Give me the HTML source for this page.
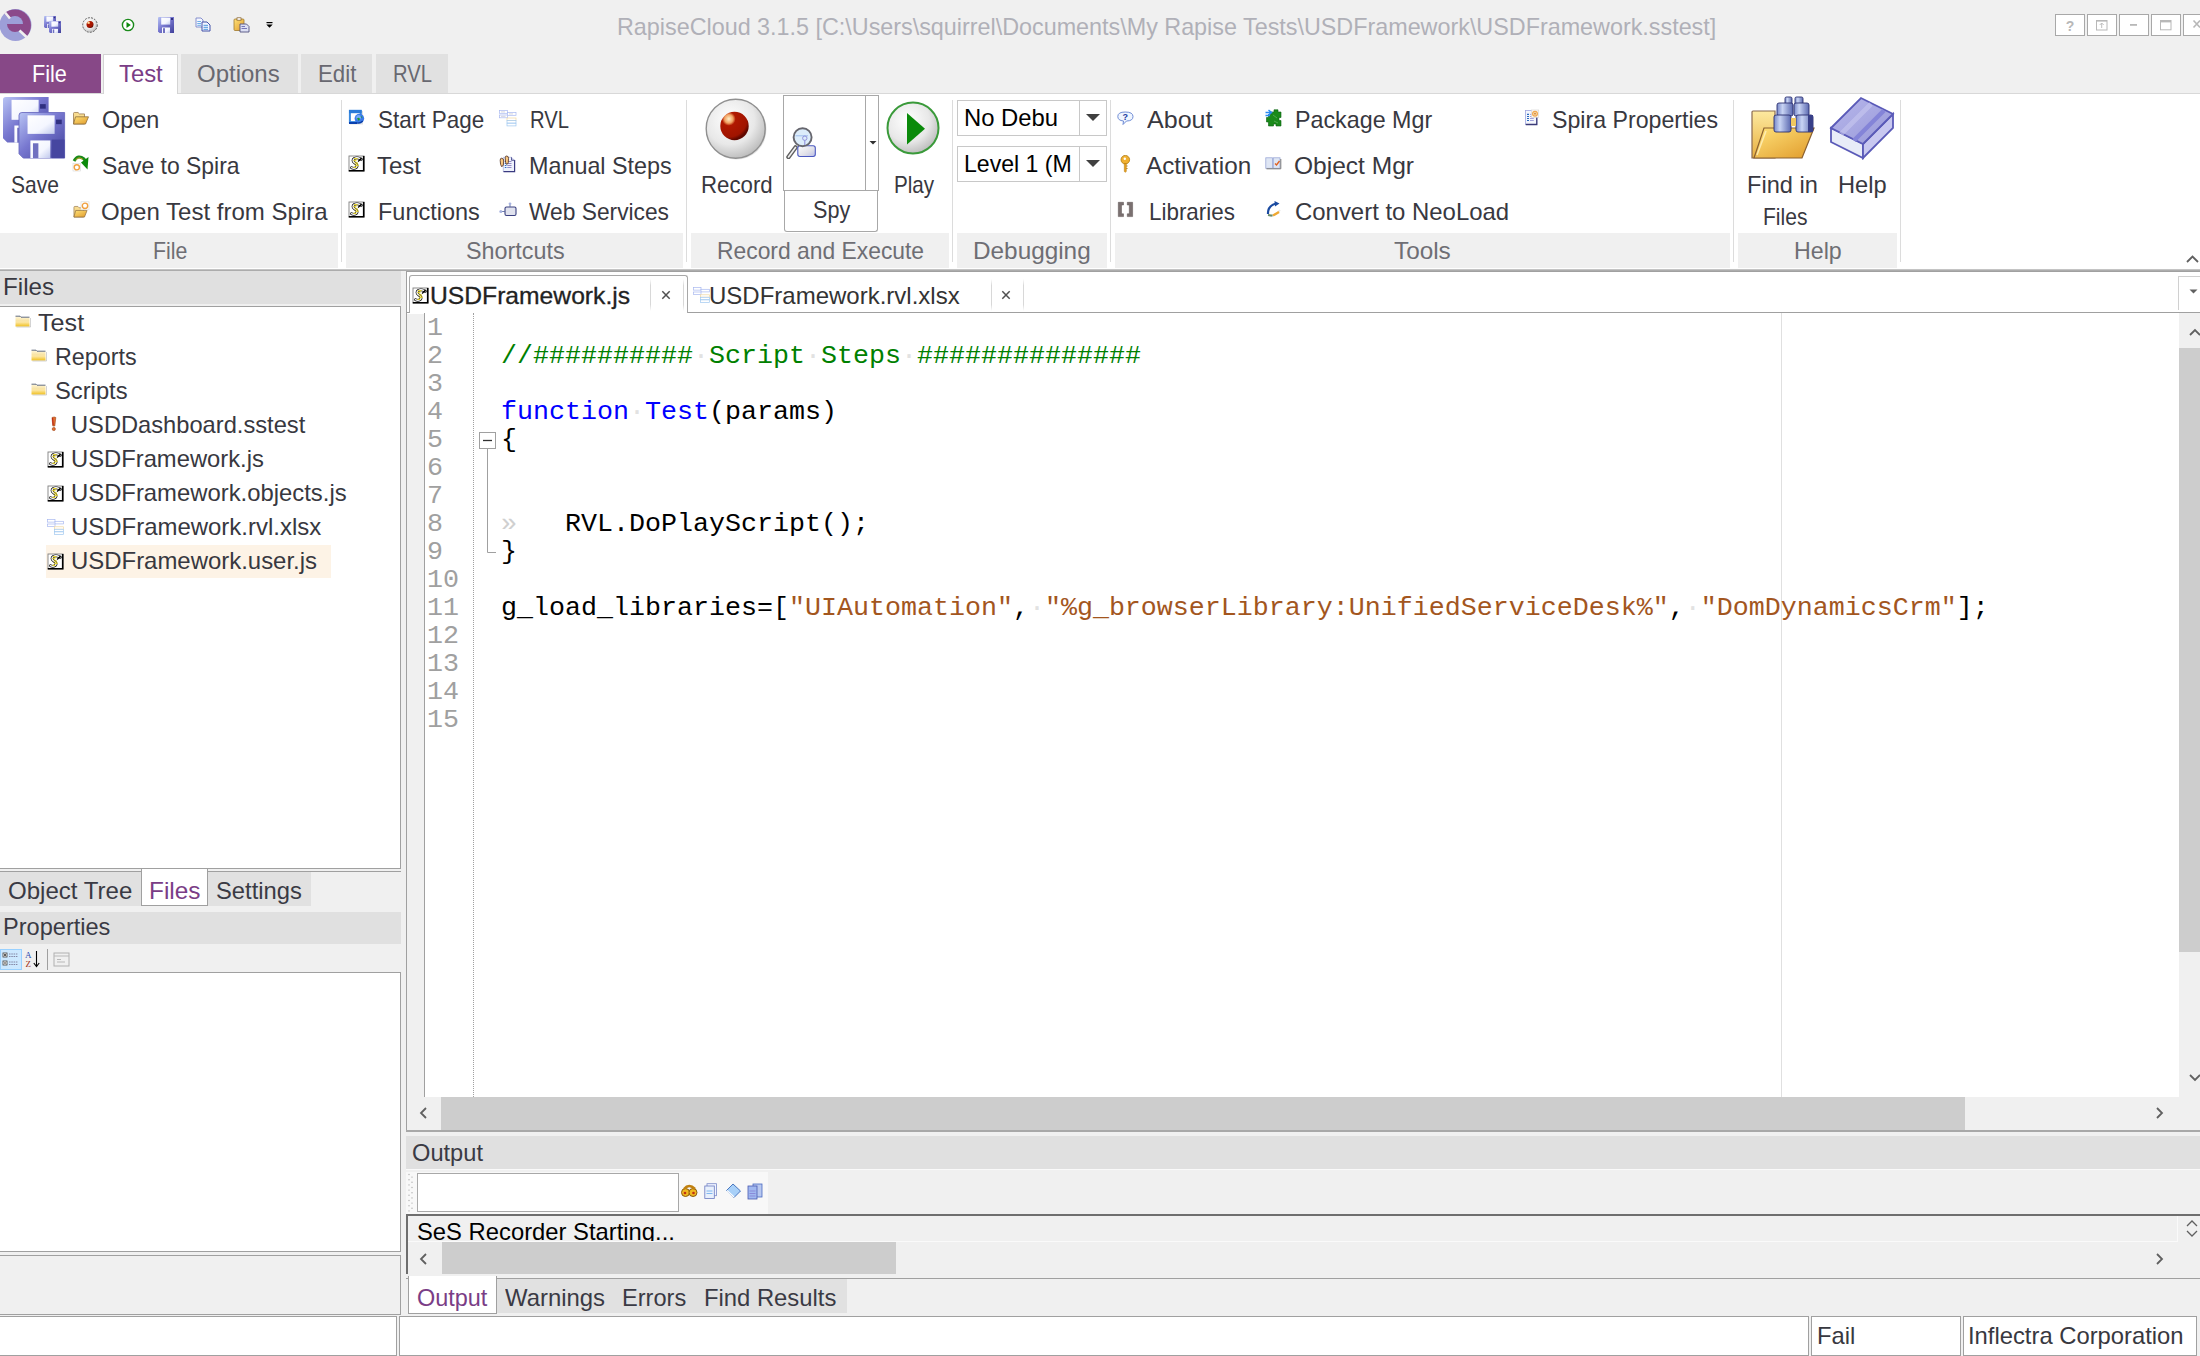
<!DOCTYPE html>
<html><head><meta charset="utf-8"><style>
html,body{margin:0;padding:0;}
body{width:2200px;height:1356px;overflow:hidden;background:#f0f0f0;position:relative;font-family:"Liberation Sans", sans-serif;}
body>div,body>svg{position:absolute;box-sizing:border-box;}
.t{white-space:pre;}
</style></head><body>
<div class="t" style="left:616.80px;top:15.38px;font-size:24px;line-height:24px;color:#b0b0b8;font-family:'Liberation Sans', sans-serif;transform:scaleX(0.9723);transform-origin:0 0;">RapiseCloud 3.1.5 [C:\Users\squirrel\Documents\My Rapise Tests\USDFramework\USDFramework.sstest]</div>
<div style="left:0px;top:93px;width:2200px;height:176px;background:#fff;border-top:1px solid #d8d8d8"></div>
<div style="left:0px;top:54px;width:101px;height:39px;background:#874887"></div>
<div class="t" style="left:32.00px;top:62.18px;font-size:24px;line-height:24px;color:#ffffff;font-family:'Liberation Sans', sans-serif;transform:scaleX(0.9010);transform-origin:0 0;">File</div>
<div style="left:103px;top:54px;width:75px;height:40px;background:#fff;border:1px solid #d4d4d4;border-bottom:none"></div>
<div class="t" style="left:119.30px;top:62.18px;font-size:24px;line-height:24px;color:#7a3d86;font-family:'Liberation Sans', sans-serif;transform:scaleX(0.9932);transform-origin:0 0;">Test</div>
<div style="left:181px;top:54px;width:117px;height:39px;background:#e1e1e1"></div>
<div class="t" style="left:197.30px;top:62.18px;font-size:24px;line-height:24px;color:#686870;font-family:'Liberation Sans', sans-serif;transform:scaleX(0.9994);transform-origin:0 0;">Options</div>
<div style="left:301px;top:54px;width:71px;height:39px;background:#e1e1e1"></div>
<div class="t" style="left:318.00px;top:62.18px;font-size:24px;line-height:24px;color:#686870;font-family:'Liberation Sans', sans-serif;transform:scaleX(0.9281);transform-origin:0 0;">Edit</div>
<div style="left:376px;top:54px;width:72px;height:39px;background:#e1e1e1"></div>
<div class="t" style="left:393.00px;top:62.18px;font-size:24px;line-height:24px;color:#686870;font-family:'Liberation Sans', sans-serif;transform:scaleX(0.8432);transform-origin:0 0;">RVL</div>
<div style="left:0px;top:269px;width:2200px;height:2px;background:linear-gradient(#d0d0d0,#a0a0a0)"></div>
<div style="left:0px;top:233px;width:338px;height:35px;background:#f0f0f0"></div>
<div class="t" style="left:152.70px;top:239.18px;font-size:24px;line-height:24px;color:#6e6e74;font-family:'Liberation Sans', sans-serif;transform:scaleX(0.8880);transform-origin:0 0;">File</div>
<div style="left:346px;top:233px;width:337px;height:35px;background:#f0f0f0"></div>
<div class="t" style="left:465.70px;top:239.18px;font-size:24px;line-height:24px;color:#6e6e74;font-family:'Liberation Sans', sans-serif;transform:scaleX(0.9726);transform-origin:0 0;">Shortcuts</div>
<div style="left:691px;top:233px;width:258px;height:35px;background:#f0f0f0"></div>
<div class="t" style="left:716.50px;top:239.18px;font-size:24px;line-height:24px;color:#6e6e74;font-family:'Liberation Sans', sans-serif;transform:scaleX(0.9522);transform-origin:0 0;">Record and Execute</div>
<div style="left:957px;top:233px;width:150px;height:35px;background:#f0f0f0"></div>
<div class="t" style="left:973.30px;top:239.18px;font-size:24px;line-height:24px;color:#6e6e74;font-family:'Liberation Sans', sans-serif;transform:scaleX(1.0136);transform-origin:0 0;">Debugging</div>
<div style="left:1115px;top:233px;width:615px;height:35px;background:#f0f0f0"></div>
<div class="t" style="left:1394.00px;top:239.18px;font-size:24px;line-height:24px;color:#6e6e74;font-family:'Liberation Sans', sans-serif;transform:scaleX(1.0125);transform-origin:0 0;">Tools</div>
<div style="left:1738px;top:233px;width:159px;height:35px;background:#f0f0f0"></div>
<div class="t" style="left:1794.00px;top:239.18px;font-size:24px;line-height:24px;color:#6e6e74;font-family:'Liberation Sans', sans-serif;transform:scaleX(0.9661);transform-origin:0 0;">Help</div>
<div style="left:341px;top:100px;width:1px;height:162px;background:#dcdcdc"></div>
<div style="left:686px;top:100px;width:1px;height:162px;background:#dcdcdc"></div>
<div style="left:952px;top:100px;width:1px;height:162px;background:#dcdcdc"></div>
<div style="left:1110px;top:100px;width:1px;height:162px;background:#dcdcdc"></div>
<div style="left:1733px;top:100px;width:1px;height:162px;background:#dcdcdc"></div>
<div style="left:1900px;top:100px;width:1px;height:162px;background:#dcdcdc"></div>
<div class="t" style="left:11.00px;top:172.98px;font-size:24px;line-height:24px;color:#383840;font-family:'Liberation Sans', sans-serif;transform:scaleX(0.8767);transform-origin:0 0;">Save</div>
<div class="t" style="left:101.80px;top:107.88px;font-size:24px;line-height:24px;color:#383840;font-family:'Liberation Sans', sans-serif;transform:scaleX(0.9736);transform-origin:0 0;">Open</div>
<div class="t" style="left:101.80px;top:153.98px;font-size:24px;line-height:24px;color:#383840;font-family:'Liberation Sans', sans-serif;transform:scaleX(0.9547);transform-origin:0 0;">Save to Spira</div>
<div class="t" style="left:101.00px;top:199.98px;font-size:24px;line-height:24px;color:#383840;font-family:'Liberation Sans', sans-serif;transform:scaleX(1.0014);transform-origin:0 0;">Open Test from Spira</div>
<div class="t" style="left:377.90px;top:107.88px;font-size:24px;line-height:24px;color:#383840;font-family:'Liberation Sans', sans-serif;transform:scaleX(0.9358);transform-origin:0 0;">Start Page</div>
<div class="t" style="left:377.00px;top:153.98px;font-size:24px;line-height:24px;color:#383840;font-family:'Liberation Sans', sans-serif;transform:scaleX(1.0000);transform-origin:0 0;">Test</div>
<div class="t" style="left:378.00px;top:199.98px;font-size:24px;line-height:24px;color:#383840;font-family:'Liberation Sans', sans-serif;transform:scaleX(0.9779);transform-origin:0 0;">Functions</div>
<div class="t" style="left:530.00px;top:107.88px;font-size:24px;line-height:24px;color:#383840;font-family:'Liberation Sans', sans-serif;transform:scaleX(0.8432);transform-origin:0 0;">RVL</div>
<div class="t" style="left:529.00px;top:153.98px;font-size:24px;line-height:24px;color:#383840;font-family:'Liberation Sans', sans-serif;transform:scaleX(0.9724);transform-origin:0 0;">Manual Steps</div>
<div class="t" style="left:528.50px;top:199.98px;font-size:24px;line-height:24px;color:#383840;font-family:'Liberation Sans', sans-serif;transform:scaleX(0.9483);transform-origin:0 0;">Web Services</div>
<div class="t" style="left:701.30px;top:173.28px;font-size:24px;line-height:24px;color:#383840;font-family:'Liberation Sans', sans-serif;transform:scaleX(0.9267);transform-origin:0 0;">Record</div>
<div class="t" style="left:893.80px;top:173.28px;font-size:24px;line-height:24px;color:#383840;font-family:'Liberation Sans', sans-serif;transform:scaleX(0.8599);transform-origin:0 0;">Play</div>
<div style="left:783px;top:95px;width:96px;height:96px;border:1px solid #a8a8a8;background:#fff"></div>
<div style="left:865px;top:95px;width:1px;height:96px;background:#a8a8a8"></div>
<div style="left:784px;top:191px;width:94px;height:41px;border:1px solid #a8a8a8;border-top:none;border-radius:0 0 3px 3px;background:#fff"></div>
<div class="t" style="left:812.80px;top:198.38px;font-size:24px;line-height:24px;color:#383840;font-family:'Liberation Sans', sans-serif;transform:scaleX(0.8991);transform-origin:0 0;">Spy</div>
<div style="left:957px;top:100px;width:150px;height:36px;border:1px solid #c8c8c8;background:#fff"></div>
<div style="left:1079px;top:100px;width:1px;height:36px;background:#c8c8c8"></div>
<div class="t" style="left:964.40px;top:106.48px;font-size:24px;line-height:24px;color:#000;font-family:'Liberation Sans', sans-serif;transform:scaleX(0.9931);transform-origin:0 0;">No Debu</div>
<div style="left:957px;top:146px;width:150px;height:36px;border:1px solid #c8c8c8;background:#fff"></div>
<div style="left:1079px;top:146px;width:1px;height:36px;background:#c8c8c8"></div>
<div class="t" style="left:964.40px;top:152.18px;font-size:24px;line-height:24px;color:#000;font-family:'Liberation Sans', sans-serif;transform:scaleX(0.9616);transform-origin:0 0;">Level 1 (M</div>
<div class="t" style="left:1146.50px;top:107.88px;font-size:24px;line-height:24px;color:#383840;font-family:'Liberation Sans', sans-serif;transform:scaleX(1.0438);transform-origin:0 0;">About</div>
<div class="t" style="left:1146.20px;top:153.98px;font-size:24px;line-height:24px;color:#383840;font-family:'Liberation Sans', sans-serif;transform:scaleX(1.0106);transform-origin:0 0;">Activation</div>
<div class="t" style="left:1148.50px;top:199.88px;font-size:24px;line-height:24px;color:#383840;font-family:'Liberation Sans', sans-serif;transform:scaleX(0.9337);transform-origin:0 0;">Libraries</div>
<div class="t" style="left:1295.20px;top:107.88px;font-size:24px;line-height:24px;color:#383840;font-family:'Liberation Sans', sans-serif;transform:scaleX(0.9698);transform-origin:0 0;">Package Mgr</div>
<div class="t" style="left:1293.90px;top:153.98px;font-size:24px;line-height:24px;color:#383840;font-family:'Liberation Sans', sans-serif;transform:scaleX(1.0224);transform-origin:0 0;">Object Mgr</div>
<div class="t" style="left:1294.50px;top:199.88px;font-size:24px;line-height:24px;color:#383840;font-family:'Liberation Sans', sans-serif;transform:scaleX(0.9970);transform-origin:0 0;">Convert to NeoLoad</div>
<div class="t" style="left:1551.50px;top:107.88px;font-size:24px;line-height:24px;color:#383840;font-family:'Liberation Sans', sans-serif;transform:scaleX(0.9650);transform-origin:0 0;">Spira Properties</div>
<div class="t" style="left:1747.20px;top:173.38px;font-size:24px;line-height:24px;color:#383840;font-family:'Liberation Sans', sans-serif;transform:scaleX(0.9819);transform-origin:0 0;">Find in</div>
<div class="t" style="left:1763.00px;top:204.98px;font-size:24px;line-height:24px;color:#383840;font-family:'Liberation Sans', sans-serif;transform:scaleX(0.8770);transform-origin:0 0;">Files</div>
<div class="t" style="left:1838.00px;top:173.38px;font-size:24px;line-height:24px;color:#383840;font-family:'Liberation Sans', sans-serif;transform:scaleX(0.9843);transform-origin:0 0;">Help</div>
<div style="left:0px;top:271px;width:401px;height:33px;background:#e0e0e0"></div>
<div class="t" style="left:2.50px;top:274.78px;font-size:24px;line-height:24px;color:#383840;font-family:'Liberation Sans', sans-serif;transform:scaleX(1.0074);transform-origin:0 0;">Files</div>
<div style="left:0px;top:306px;width:401px;height:563px;background:#fff;border-top:1px solid #a0a0a0;border-right:1px solid #a0a0a0;border-bottom:1px solid #a0a0a0"></div>
<div style="left:0px;top:871px;width:401px;height:1px;background:#a0a0a0"></div>
<div style="left:46px;top:545px;width:285px;height:33px;background:#fdf3e6"></div>
<div class="t" style="left:38.20px;top:310.98px;font-size:24px;line-height:24px;color:#383840;font-family:'Liberation Sans', sans-serif;transform:scaleX(1.0477);transform-origin:0 0;">Test</div>
<div class="t" style="left:54.70px;top:344.98px;font-size:24px;line-height:24px;color:#383840;font-family:'Liberation Sans', sans-serif;transform:scaleX(0.9702);transform-origin:0 0;">Reports</div>
<div class="t" style="left:54.70px;top:378.98px;font-size:24px;line-height:24px;color:#383840;font-family:'Liberation Sans', sans-serif;transform:scaleX(0.9894);transform-origin:0 0;">Scripts</div>
<div class="t" style="left:70.60px;top:412.98px;font-size:24px;line-height:24px;color:#383840;font-family:'Liberation Sans', sans-serif;transform:scaleX(0.9866);transform-origin:0 0;">USDDashboard.sstest</div>
<div class="t" style="left:70.60px;top:446.98px;font-size:24px;line-height:24px;color:#383840;font-family:'Liberation Sans', sans-serif;transform:scaleX(0.9906);transform-origin:0 0;">USDFramework.js</div>
<div class="t" style="left:70.60px;top:480.98px;font-size:24px;line-height:24px;color:#383840;font-family:'Liberation Sans', sans-serif;transform:scaleX(0.9936);transform-origin:0 0;">USDFramework.objects.js</div>
<div class="t" style="left:70.60px;top:514.98px;font-size:24px;line-height:24px;color:#383840;font-family:'Liberation Sans', sans-serif;transform:scaleX(0.9979);transform-origin:0 0;">USDFramework.rvl.xlsx</div>
<div class="t" style="left:70.60px;top:548.98px;font-size:24px;line-height:24px;color:#383840;font-family:'Liberation Sans', sans-serif;transform:scaleX(0.9970);transform-origin:0 0;">USDFramework.user.js</div>
<div style="left:0px;top:872px;width:141px;height:34px;background:#e1e1e1"></div>
<div style="left:208px;top:872px;width:103px;height:34px;background:#e1e1e1"></div>
<div style="left:141px;top:869px;width:67px;height:37px;background:#fff;border:1px solid #a0a0a0;border-top:none"></div>
<div class="t" style="left:8.20px;top:878.88px;font-size:24px;line-height:24px;color:#3a3a44;font-family:'Liberation Sans', sans-serif;transform:scaleX(1.0024);transform-origin:0 0;">Object Tree</div>
<div class="t" style="left:149.00px;top:878.88px;font-size:24px;line-height:24px;color:#7a3d86;font-family:'Liberation Sans', sans-serif;transform:scaleX(1.0153);transform-origin:0 0;">Files</div>
<div class="t" style="left:216.40px;top:878.88px;font-size:24px;line-height:24px;color:#3a3a44;font-family:'Liberation Sans', sans-serif;transform:scaleX(0.9890);transform-origin:0 0;">Settings</div>
<div style="left:0px;top:912px;width:401px;height:32px;background:#e0e0e0"></div>
<div class="t" style="left:3.00px;top:915.38px;font-size:24px;line-height:24px;color:#3a3a44;font-family:'Liberation Sans', sans-serif;transform:scaleX(0.9819);transform-origin:0 0;">Properties</div>
<div style="left:0px;top:972px;width:401px;height:280px;background:#fff;border-top:1px solid #a0a0a0;border-right:1px solid #a0a0a0;border-bottom:1px solid #a0a0a0"></div>
<div style="left:0px;top:1255px;width:401px;height:60px;background:#f0f0f0;border-top:1px solid #a0a0a0;border-bottom:1px solid #a0a0a0;border-right:1px solid #a0a0a0"></div>
<div style="left:406px;top:271px;width:1794px;height:1px;background:#a0a0a0"></div>
<div style="left:406px;top:271px;width:1px;height:860px;background:#a0a0a0"></div>
<div style="left:407px;top:272px;width:1793px;height:41px;background:#fff"></div>
<div style="left:407px;top:312px;width:1793px;height:1px;background:#a0a0a0"></div>
<div style="left:409px;top:275px;width:279px;height:39px;background:#fff;border:1px solid #a8a8a8;border-bottom:none;border-radius:3px 3px 0 0"></div>
<div class="t" style="left:430.00px;top:283.98px;font-size:24px;line-height:24px;color:#222;font-family:'Liberation Sans', sans-serif;transform:scaleX(1.0276);transform-origin:0 0;-webkit-text-stroke:0.3px #222">USDFramework.js</div>
<div class="t" style="left:709.40px;top:284.18px;font-size:24px;line-height:24px;color:#333;font-family:'Liberation Sans', sans-serif;transform:scaleX(0.9999);transform-origin:0 0;">USDFramework.rvl.xlsx</div>
<div style="left:407px;top:313px;width:1772px;height:784px;background:#fff"></div>
<div style="left:407px;top:314px;width:17px;height:783px;background:#f0f0f0"></div>
<div style="left:424px;top:313px;width:1px;height:784px;background:#a0a0a0"></div>
<div style="left:473px;top:313px;width:0px;height:784px;border-left:1px dotted #a0a0a0"></div>
<div style="left:1781px;top:313px;width:1px;height:784px;background:#e0e0e0"></div>
<div class="t" style="left:427.00px;top:315.07px;font-size:26.67px;line-height:26.67px;color:#a0a0a0;font-family:'Liberation Mono', monospace;">1</div>
<div class="t" style="left:427.00px;top:343.07px;font-size:26.67px;line-height:26.67px;color:#a0a0a0;font-family:'Liberation Mono', monospace;">2</div>
<div class="t" style="left:427.00px;top:371.07px;font-size:26.67px;line-height:26.67px;color:#a0a0a0;font-family:'Liberation Mono', monospace;">3</div>
<div class="t" style="left:427.00px;top:399.07px;font-size:26.67px;line-height:26.67px;color:#a0a0a0;font-family:'Liberation Mono', monospace;">4</div>
<div class="t" style="left:427.00px;top:427.07px;font-size:26.67px;line-height:26.67px;color:#a0a0a0;font-family:'Liberation Mono', monospace;">5</div>
<div class="t" style="left:427.00px;top:455.07px;font-size:26.67px;line-height:26.67px;color:#a0a0a0;font-family:'Liberation Mono', monospace;">6</div>
<div class="t" style="left:427.00px;top:483.07px;font-size:26.67px;line-height:26.67px;color:#a0a0a0;font-family:'Liberation Mono', monospace;">7</div>
<div class="t" style="left:427.00px;top:511.07px;font-size:26.67px;line-height:26.67px;color:#a0a0a0;font-family:'Liberation Mono', monospace;">8</div>
<div class="t" style="left:427.00px;top:539.07px;font-size:26.67px;line-height:26.67px;color:#a0a0a0;font-family:'Liberation Mono', monospace;">9</div>
<div class="t" style="left:427.00px;top:567.07px;font-size:26.67px;line-height:26.67px;color:#a0a0a0;font-family:'Liberation Mono', monospace;">10</div>
<div class="t" style="left:427.00px;top:595.07px;font-size:26.67px;line-height:26.67px;color:#a0a0a0;font-family:'Liberation Mono', monospace;">11</div>
<div class="t" style="left:427.00px;top:623.07px;font-size:26.67px;line-height:26.67px;color:#a0a0a0;font-family:'Liberation Mono', monospace;">12</div>
<div class="t" style="left:427.00px;top:651.07px;font-size:26.67px;line-height:26.67px;color:#a0a0a0;font-family:'Liberation Mono', monospace;">13</div>
<div class="t" style="left:427.00px;top:679.07px;font-size:26.67px;line-height:26.67px;color:#a0a0a0;font-family:'Liberation Mono', monospace;">14</div>
<div class="t" style="left:427.00px;top:707.07px;font-size:26.67px;line-height:26.67px;color:#a0a0a0;font-family:'Liberation Mono', monospace;">15</div>
<div class="t" style="left:501.00px;top:343.07px;font-size:26.67px;line-height:26.67px;color:#000;font-family:'Liberation Mono', monospace;"><span style="color:#008000">//##########<span style="color:#e2e2e2">·</span><span style="color:#008000">Script</span><span style="color:#e2e2e2">·</span><span style="color:#008000">Steps</span><span style="color:#e2e2e2">·</span><span style="color:#008000">##############</span></span></div>
<div class="t" style="left:501.00px;top:399.07px;font-size:26.67px;line-height:26.67px;color:#000;font-family:'Liberation Mono', monospace;"><span style="color:#0000ff">function</span><span style="color:#e2e2e2">·</span><span style="color:#0000ff">Test</span>(params)</div>
<div class="t" style="left:501.00px;top:427.07px;font-size:26.67px;line-height:26.67px;color:#000;font-family:'Liberation Mono', monospace;">{</div>
<div class="t" style="left:501.00px;top:511.07px;font-size:26.67px;line-height:26.67px;color:#000;font-family:'Liberation Mono', monospace;"><span style="color:#d0d0d0">»</span>   RVL.DoPlayScript();</div>
<div class="t" style="left:501.00px;top:539.07px;font-size:26.67px;line-height:26.67px;color:#000;font-family:'Liberation Mono', monospace;">}</div>
<div class="t" style="left:501.00px;top:595.07px;font-size:26.67px;line-height:26.67px;color:#000;font-family:'Liberation Mono', monospace;">g_load_libraries=[<span style="color:#a3561e">"UIAutomation"</span>,<span style="color:#e2e2e2">·</span><span style="color:#a3561e">"%g_browserLibrary:UnifiedServiceDesk%"</span>,<span style="color:#e2e2e2">·</span><span style="color:#a3561e">"DomDynamicsCrm"</span>];</div>
<div style="left:2179px;top:313px;width:21px;height:784px;background:#f0f0f0"></div>
<div style="left:2179px;top:348px;width:21px;height:604px;background:#cdcdcd"></div>
<div style="left:407px;top:1097px;width:1772px;height:33px;background:#f0f0f0"></div>
<div style="left:441px;top:1097px;width:1524px;height:33px;background:#cdcdcd"></div>
<div style="left:406px;top:1130px;width:1794px;height:2px;background:#a8a8a8"></div>
<div style="left:406px;top:1136px;width:1794px;height:33px;background:#e0e0e0"></div>
<div class="t" style="left:411.50px;top:1140.78px;font-size:24px;line-height:24px;color:#3a3a44;font-family:'Liberation Sans', sans-serif;transform:scaleX(0.9847);transform-origin:0 0;">Output</div>
<div style="left:406px;top:1169px;width:1794px;height:1px;background:#fafafa"></div>
<div style="left:406px;top:1172px;width:362px;height:42px;background:#f8f8f8"></div>
<div style="left:417px;top:1173px;width:262px;height:39px;background:#fff;border:1px solid #a8a8a8"></div>
<div style="left:406px;top:1214px;width:1794px;height:2px;background:#6e6e6e"></div>
<div style="left:406px;top:1214px;width:2px;height:60px;background:#6e6e6e"></div>
<div class="t" style="left:417.00px;top:1220.38px;font-size:24px;line-height:24px;color:#000;font-family:'Liberation Sans', sans-serif;transform:scaleX(0.9914);transform-origin:0 0;height:20.5px;overflow:hidden">SeS Recorder Starting...</div>
<div style="left:408px;top:1241px;width:1770px;height:1px;background:#fafafa"></div>
<div style="left:2177px;top:1216px;width:1px;height:26px;background:#fafafa"></div>
<div style="left:408px;top:1242px;width:1792px;height:32px;background:#f0f0f0"></div>
<div style="left:442px;top:1242px;width:454px;height:32px;background:#cdcdcd"></div>
<div style="left:406px;top:1278px;width:1794px;height:1px;background:#a0a0a0"></div>
<div style="left:497px;top:1279px;width:350px;height:34px;background:#e1e1e1"></div>
<div style="left:408px;top:1276px;width:89px;height:38px;background:#fff;border:1px solid #a0a0a0;border-top:none"></div>
<div class="t" style="left:417.00px;top:1286.38px;font-size:24px;line-height:24px;color:#7a3d86;font-family:'Liberation Sans', sans-serif;transform:scaleX(0.9764);transform-origin:0 0;">Output</div>
<div class="t" style="left:505.00px;top:1286.38px;font-size:24px;line-height:24px;color:#3a3a44;font-family:'Liberation Sans', sans-serif;transform:scaleX(0.9950);transform-origin:0 0;">Warnings</div>
<div class="t" style="left:622.00px;top:1286.38px;font-size:24px;line-height:24px;color:#3a3a44;font-family:'Liberation Sans', sans-serif;transform:scaleX(0.9836);transform-origin:0 0;">Errors</div>
<div class="t" style="left:704.00px;top:1286.38px;font-size:24px;line-height:24px;color:#3a3a44;font-family:'Liberation Sans', sans-serif;transform:scaleX(0.9919);transform-origin:0 0;">Find Results</div>
<div style="left:0px;top:1316px;width:2200px;height:40px;background:#f0f0f0"></div>
<div style="left:-1px;top:1316px;width:398px;height:40px;background:#fff;border:1px solid #a0a0a0"></div>
<div style="left:399px;top:1316px;width:1410px;height:40px;background:#fff;border:1px solid #a0a0a0"></div>
<div style="left:1811px;top:1316px;width:150px;height:40px;background:#fff;border:1px solid #a0a0a0"></div>
<div style="left:1963px;top:1316px;width:234px;height:40px;background:#fff;border:1px solid #a0a0a0"></div>
<div class="t" style="left:1816.80px;top:1323.98px;font-size:24px;line-height:24px;color:#383840;font-family:'Liberation Sans', sans-serif;transform:scaleX(0.9890);transform-origin:0 0;">Fail</div>
<div class="t" style="left:1968.00px;top:1323.98px;font-size:24px;line-height:24px;color:#383840;font-family:'Liberation Sans', sans-serif;transform:scaleX(0.9913);transform-origin:0 0;">Inflectra Corporation</div>
<svg style="left:0px;top:9px" width="32" height="32" viewBox="0 0 32 32"><circle cx="15.5" cy="16" r="16" fill="#9d9fd8"/>
<path d="M4.2 4.7 A16 16 0 0 1 26.8 27.3 Z" fill="#8b4a8b"/>
<path d="M7 15 A8 8 0 0 1 23 15 Z" fill="#9d9fd8"/><path d="M7 15 A8 8 0 0 0 23 15 Z" fill="#8b4a8b"/>
<path d="M5 3.5 L10 9.5 M19.5 21.5 L26.5 28" stroke="#f0f0f0" stroke-width="2.6"/></svg>
<svg style="position:absolute;width:0;height:0"><defs>
<linearGradient id="flop" x1="0" y1="0" x2="1" y2="1"><stop offset="0" stop-color="#b8c4f4"/><stop offset="0.45" stop-color="#7878d0"/><stop offset="1" stop-color="#40409a"/></linearGradient>
<linearGradient id="lab" x1="0" y1="0" x2="1" y2="1"><stop offset="0" stop-color="#ffffff"/><stop offset="0.6" stop-color="#f4f6ff"/><stop offset="1" stop-color="#c0c8ec"/></linearGradient>
<linearGradient id="fold" x1="0" y1="0" x2="0" y2="1"><stop offset="0" stop-color="#fde9a0"/><stop offset="1" stop-color="#e8b040"/></linearGradient>
<linearGradient id="fold2" x1="0" y1="0" x2="1" y2="1"><stop offset="0" stop-color="#ffe27a"/><stop offset="1" stop-color="#e09a2a"/></linearGradient>
<radialGradient id="redball" cx="0.3" cy="0.25" r="0.75"><stop offset="0" stop-color="#fff0c8"/><stop offset="0.2" stop-color="#f0a060"/><stop offset="0.32" stop-color="#b01800"/><stop offset="0.85" stop-color="#a01400"/><stop offset="1" stop-color="#600800"/></radialGradient>
<radialGradient id="grayball" cx="0.4" cy="0.35" r="0.7"><stop offset="0" stop-color="#ffffff"/><stop offset="0.6" stop-color="#e8e8e8"/><stop offset="1" stop-color="#b8b8b8"/></radialGradient>
<linearGradient id="book" x1="0" y1="0" x2="1" y2="1"><stop offset="0" stop-color="#b8b8ec"/><stop offset="1" stop-color="#9898d8"/></linearGradient>
<linearGradient id="bino" x1="0" y1="0" x2="1" y2="0"><stop offset="0" stop-color="#7888c8"/><stop offset="0.35" stop-color="#c8d4f4"/><stop offset="1" stop-color="#5a68b0"/></linearGradient>
</defs></svg>
<svg style="left:44px;top:16px" width="17" height="17" viewBox="0 0 17 17"><g transform="translate(0,0) scale(0.75)"><path d="M0 1 Q0 0 1 0 H16 V16 H1.5 L0 14.5 Z" fill="url(#flop)"/>
<rect x="3.2" y="0.6" width="9" height="7" fill="url(#lab)"/><rect x="13" y="1" width="2" height="2" fill="#303080"/>
<rect x="4" y="10.5" width="8" height="5.5" fill="url(#lab)"/><rect x="5" y="11.2" width="2" height="4.8" fill="#7070c0"/></g><g transform="translate(5,5) scale(0.75)"><path d="M0 1 Q0 0 1 0 H16 V16 H1.5 L0 14.5 Z" fill="url(#flop)"/>
<rect x="3.2" y="0.6" width="9" height="7" fill="url(#lab)"/><rect x="13" y="1" width="2" height="2" fill="#303080"/>
<rect x="4" y="10.5" width="8" height="5.5" fill="url(#lab)"/><rect x="5" y="11.2" width="2" height="4.8" fill="#7070c0"/></g></svg>
<svg style="left:82px;top:17px" width="17" height="17" viewBox="0 0 17 17"><circle cx="8" cy="8" r="7.3" fill="url(#grayball)" stroke="#555" stroke-width="0.9" stroke-dasharray="2 1.2"/><circle cx="8" cy="7.5" r="3.5" fill="url(#redball)"/></svg>
<svg style="left:121px;top:18px" width="15" height="15" viewBox="0 0 15 15"><circle cx="7" cy="7" r="5.6" fill="#fff" stroke="#1a8a1a" stroke-width="1.4"/><path d="M5.5 4 L9.8 7 L5.5 10 Z" fill="#0a8a0a"/></svg>
<svg style="left:157px;top:16px" width="18" height="18" viewBox="0 0 18 18"><g transform="translate(1,1) scale(1.0)"><path d="M0 1 Q0 0 1 0 H16 V16 H1.5 L0 14.5 Z" fill="url(#flop)"/>
<rect x="3.2" y="0.6" width="9" height="7" fill="url(#lab)"/><rect x="13" y="1" width="2" height="2" fill="#303080"/>
<rect x="4" y="10.5" width="8" height="5.5" fill="url(#lab)"/><rect x="5" y="11.2" width="2" height="4.8" fill="#7070c0"/></g></svg>
<svg style="left:195px;top:17px" width="17" height="15" viewBox="0 0 17 15"><path d="M1 1 H6 L8 3 V10 H1 Z" fill="#f4f6ff" stroke="#7a86c8" stroke-width="0.9"/><path d="M2.3 4.5 H6 M2.3 6.5 H6 M2.3 8.3 H6" stroke="#4a9ae0" stroke-width="0.8"/>
<path d="M7 5 H12 L15 8 V14 H7 Z" fill="#f4f6ff" stroke="#4050a8" stroke-width="1"/><path d="M8.5 8.3 H13 M8.5 10.3 H13 M8.5 12.3 H13" stroke="#3a8ad8" stroke-width="0.9"/></svg>
<svg style="left:233px;top:17px" width="18" height="16" viewBox="0 0 18 16"><rect x="1" y="2" width="10" height="11.5" rx="1" fill="url(#fold2)" stroke="#a07a30" stroke-width="0.8"/><rect x="4" y="0.8" width="4" height="2.4" fill="#fff" stroke="#805a20" stroke-width="0.7"/>
<path d="M7 7 H13.5 L16 9.5 V15 H7 Z" fill="#dde0f4" stroke="#505080" stroke-width="0.9"/><path d="M8.5 9.5 H12 M8.5 11.5 H14" stroke="#6a6ab0" stroke-width="0.9"/></svg>
<svg style="left:265px;top:20px" width="9" height="9" viewBox="0 0 9 9"><rect x="1.5" y="2" width="6" height="1.2" fill="#000"/><path d="M1.3 4.6 H7.7 L4.5 7.8 Z" fill="#000"/></svg>
<div style="left:2055px;top:14px;width:30px;height:22px;background:#fff;border:1.3px solid #a8a8a8"></div>
<div style="left:2087px;top:14px;width:30px;height:22px;background:#fff;border:1.3px solid #a8a8a8"></div>
<div style="left:2119px;top:14px;width:30px;height:22px;background:#fff;border:1.3px solid #a8a8a8"></div>
<div style="left:2151px;top:14px;width:30px;height:22px;background:#fff;border:1.3px solid #a8a8a8"></div>
<div style="left:2183px;top:14px;width:30px;height:22px;background:#fff;border:1.3px solid #a8a8a8"></div>
<svg style="left:2055px;top:14px" width="30" height="22" viewBox="0 0 30 22"><text x="15" y="16.5" font-size="14" font-weight="bold" text-anchor="middle" fill="#b8b8b8" font-family="Liberation Sans">?</text></svg>
<svg style="left:2087px;top:14px" width="30" height="22" viewBox="0 0 30 22"><rect x="9.5" y="6.5" width="10.5" height="9.5" fill="none" stroke="#b8b8b8" stroke-width="1"/><rect x="9.5" y="6" width="10.5" height="1.6" fill="#b8b8b8"/><path d="M14.7 14 V9.2 M12.7 11 L14.7 9 L16.7 11" stroke="#b8b8b8" stroke-width="0.9" fill="none"/></svg>
<svg style="left:2119px;top:14px" width="30" height="22" viewBox="0 0 30 22"><rect x="11" y="10" width="7" height="1.8" fill="#b8b8b8"/></svg>
<svg style="left:2151px;top:14px" width="30" height="22" viewBox="0 0 30 22"><rect x="9.5" y="6.5" width="10.5" height="9.3" fill="none" stroke="#b8b8b8" stroke-width="1"/><rect x="9.5" y="6" width="10.5" height="2.4" fill="#b8b8b8"/></svg>
<svg style="left:2183px;top:14px" width="17" height="22" viewBox="0 0 17 22"><path d="M10.5 6.5 L17 13.5 M17 6.5 L10.5 13.5" stroke="#b8b8b8" stroke-width="1.6"/></svg>
<svg style="left:2px;top:96px" width="64" height="64" viewBox="0 0 64 64"><g transform="translate(1,1) scale(2.85)">
<path d="M0 1 Q0 0 1 0 H16 V16 H1.5 L0 14.5 Z" fill="url(#flop)"/><rect x="3" y="1" width="9.5" height="7" fill="url(#lab)"/><rect x="13" y="2.5" width="2" height="1.6" fill="#303080"/><rect x="4" y="10" width="7" height="6" fill="url(#lab)"/><rect x="5" y="10.8" width="2" height="5.2" fill="#7070c0"/></g>
<g transform="translate(17,16.5) scale(2.85)">
<path d="M0 1 Q0 0 1 0 H16 V16 H1.5 L0 14.5 Z" fill="url(#flop)" stroke="#6868c0" stroke-width="0.3"/><rect x="3" y="1" width="9.5" height="6.5" fill="url(#lab)"/><rect x="13" y="2.5" width="2" height="1.6" fill="#303080"/><rect x="4" y="9.8" width="7" height="6.2" fill="url(#lab)"/><rect x="4.9" y="10.8" width="1.9" height="5.2" fill="#7070c0"/><rect x="11.5" y="9.5" width="4.5" height="6.5" fill="#4646a0"/></g></svg>
<svg style="left:72px;top:111px" width="18" height="15" viewBox="0 0 18 15"><g transform="translate(1,1) scale(1.0,0.9615384615384616)"><path d="M0.5 1.5 Q0.5 0.5 1.5 0.5 H5 L6.5 2 H11.5 V12.5 H0.5 Z" fill="#f8dc90" stroke="#9a7a50" stroke-width="0.8"/>
<path d="M2.5 5 H15.5 L12.5 12.5 H0.5 Z" fill="url(#fold2)" stroke="#8a6a3a" stroke-width="0.8"/></g></svg>
<svg style="left:72px;top:155px" width="18" height="18" viewBox="0 0 18 18"><rect x="1" y="8.5" width="7.5" height="7.5" fill="#fff" stroke="#d8d8d8" stroke-width="0.6"/><circle cx="4.8" cy="12.3" r="2.6" fill="none" stroke="#f0a040" stroke-width="1.4"/>
<path d="M2 6 Q6 -1 12 4 L14 6.5" stroke="#1a8a1a" stroke-width="3" fill="none"/><path d="M3.5 5 Q7 1 11 4.5" stroke="#c8a020" stroke-width="1" fill="none"/><path d="M9 7.5 L16.5 2 L15.5 14.5 Z" fill="#0a8a0a"/></svg>
<svg style="left:72px;top:201px" width="18" height="18" viewBox="0 0 18 18"><g transform="translate(1.5,5) scale(0.875,0.8846153846153846)"><path d="M0.5 1.5 Q0.5 0.5 1.5 0.5 H5 L6.5 2 H11.5 V12.5 H0.5 Z" fill="#f8dc90" stroke="#9a7a50" stroke-width="0.8"/>
<path d="M2.5 5 H15.5 L12.5 12.5 H0.5 Z" fill="url(#fold2)" stroke="#8a6a3a" stroke-width="0.8"/></g><rect x="9" y="0.8" width="8" height="8" fill="#fff" stroke="#d8d8d8" stroke-width="0.6"/><circle cx="13" cy="4.8" r="2.7" fill="none" stroke="#f0a040" stroke-width="1.4"/></svg>
<svg style="left:348px;top:109px" width="18" height="17" viewBox="0 0 18 17"><rect x="2" y="2" width="13" height="13.5" fill="#000" opacity="0.12"/><rect x="1.9" y="1.8" width="10.8" height="11.3" fill="#fff" stroke="#3a8ae0" stroke-width="2"/><rect x="1" y="1" width="12.6" height="3.2" fill="#2a7ad8"/><path d="M1 14 H9" stroke="#0a40b0" stroke-width="2"/>
<circle cx="11.4" cy="9.6" r="4.8" fill="#3a7ae8"/><circle cx="10.6" cy="8.4" r="2.4" fill="#90c0ff" opacity="0.7"/><path d="M9 9.5 Q10.5 8 12 9.8 Q12 11.5 10.5 11.8 Z M12.5 7 L14.5 8 L13.5 9 Z" fill="#1a9a30"/><path d="M8 13.8 Q11.5 15 14.8 12" stroke="#0a3aa0" stroke-width="1.2" fill="none"/></svg>
<svg style="left:348px;top:155px" width="17" height="17" viewBox="0 0 17 17"><g transform="translate(0.5,0.5)"><rect x="0.5" y="0.5" width="15" height="15" fill="#fff" stroke="#808080" stroke-width="0.9"/><path d="M15.2 0.5 V15.2 H0.3" stroke="#000" stroke-width="1.6" fill="none"/>
<path d="M11.8 3.2 Q8.5 1.5 5.8 3 Q3 5 6.2 7.5 Q10 9.5 7.8 12 Q5.5 13.5 3 12.2" fill="none" stroke="#101010" stroke-width="2.8" stroke-linecap="round"/>
<path d="M11.8 3.2 Q8.5 1.5 5.8 3 Q3 5 6.2 7.5 Q10 9.5 7.8 12 Q5.5 13.5 3 12.2" fill="none" stroke="#fff" stroke-width="1.4" stroke-linecap="round"/>
<path d="M5.5 3.2 H9 M5 5.2 H8 M6.3 7.5 H9.5 M7 9.6 H10 M5 11.8 H8" stroke="#f0d800" stroke-width="1.1"/><path d="M9.5 6 L13 3" stroke="#000" stroke-width="1.2"/><circle cx="12.8" cy="3.8" r="1.2" fill="none" stroke="#000" stroke-width="0.8"/></g></svg>
<svg style="left:348px;top:201px" width="17" height="17" viewBox="0 0 17 17"><g transform="translate(0.5,0.5)"><rect x="0.5" y="0.5" width="15" height="15" fill="#fff" stroke="#808080" stroke-width="0.9"/><path d="M15.2 0.5 V15.2 H0.3" stroke="#000" stroke-width="1.6" fill="none"/>
<path d="M11.8 3.2 Q8.5 1.5 5.8 3 Q3 5 6.2 7.5 Q10 9.5 7.8 12 Q5.5 13.5 3 12.2" fill="none" stroke="#101010" stroke-width="2.8" stroke-linecap="round"/>
<path d="M11.8 3.2 Q8.5 1.5 5.8 3 Q3 5 6.2 7.5 Q10 9.5 7.8 12 Q5.5 13.5 3 12.2" fill="none" stroke="#fff" stroke-width="1.4" stroke-linecap="round"/>
<path d="M5.5 3.2 H9 M5 5.2 H8 M6.3 7.5 H9.5 M7 9.6 H10 M5 11.8 H8" stroke="#f0d800" stroke-width="1.1"/><path d="M9.5 6 L13 3" stroke="#000" stroke-width="1.2"/><circle cx="12.8" cy="3.8" r="1.2" fill="none" stroke="#000" stroke-width="0.8"/></g></svg>
<svg style="left:499px;top:110px" width="18" height="17" viewBox="0 0 18 17"><g fill="#fff" stroke="#a8b8f0" stroke-width="0.7"><rect x="0.5" y="0.5" width="8" height="2.8"/><rect x="8.5" y="2.5" width="8.5" height="2.8"/><rect x="0.5" y="5" width="8" height="2.8"/></g><g fill="#fff" stroke="#f0d8a0" stroke-width="0.7"><rect x="8" y="8" width="9" height="2.4"/></g><g fill="#fff" stroke="#a0c8f0" stroke-width="0.7"><rect x="8" y="10.6" width="9" height="2.4"/><rect x="8" y="13.3" width="9" height="2.6"/></g><path d="M2 1.9 H6 M10 3.9 H14 M2 6.4 H6.5" stroke="#b0b0c0" stroke-width="0.5"/></svg>
<svg style="left:499px;top:155px" width="17" height="18" viewBox="0 0 17 18"><path d="M4.3 2.3 H12.5 L15.5 5.3 V16.5 H4.3 Z" fill="#eef2fc" stroke="#a8b0e0" stroke-width="0.7"/><path d="M15.6 5 V16.6 H4.5" stroke="#3a3a80" stroke-width="1.2" fill="none"/><path d="M12.5 2.3 V5.3 H15.5" fill="#c8cce8" stroke="#3a3a80" stroke-width="0.8"/>
<path d="M5.8 6.5 H7.4 M5.8 8.5 H7.4 M5.8 10.5 H7.4 M5.8 12.5 H7.4" stroke="#2a70c8" stroke-width="1"/><path d="M8.3 6.5 H12.5 M8.3 8.5 H12.5 M8.3 10.5 H12.5 M8.3 12.5 H12.5" stroke="#8a80c0" stroke-width="0.9"/>
<path d="M1.2 5.5 Q1 3 2.8 3.2 Q4.8 3.5 4.7 6 L4.3 10 Q3.5 11.8 2.5 11.5 Q1.3 10 1.2 5.5 Z" fill="#f8c880" stroke="#4a2a20" stroke-width="0.8"/><path d="M6.2 2.8 Q6.2 0.8 7.8 1 Q9.7 1.2 9.5 3.5 L9.3 7.5 Q8.8 9.5 7.5 9.3 Q6.3 8.5 6.2 2.8 Z" fill="#f8c880" stroke="#4a2a20" stroke-width="0.8"/></svg>
<svg style="left:499px;top:202px" width="18" height="15" viewBox="0 0 18 15"><rect x="6" y="5" width="11" height="8.5" rx="1.5" fill="#e0e2ee" stroke="#3a4080" stroke-width="1.1"/><path d="M11 5 V2.5 M6 9.5 H2.5" stroke="#5a6aa0" stroke-width="0.9"/><circle cx="11" cy="1.8" r="1.4" fill="#a8b4e0"/><circle cx="1.8" cy="9.5" r="1.5" fill="#a8b4e0"/></svg>
<svg style="left:703px;top:96px" width="66" height="66" viewBox="0 0 66 66"><circle cx="33.5" cy="33.5" r="30" fill="#c8c8c8" opacity="0.5"/><circle cx="32.7" cy="32.7" r="29.5" fill="url(#grayball)" stroke="#909090" stroke-width="1.4"/><circle cx="31.5" cy="30" r="14.2" fill="url(#redball)"/></svg>
<svg style="left:785px;top:126px" width="33" height="33" viewBox="0 0 33 33"><defs><linearGradient id="spyr" x1="0" y1="0" x2="1" y2="1"><stop offset="0" stop-color="#ffffff"/><stop offset="0.6" stop-color="#e0e0e8"/><stop offset="1" stop-color="#b8bce8"/></linearGradient></defs>
<path d="M3.5 31 L10.5 21.5" stroke="#606060" stroke-width="4.5" stroke-linecap="round"/><path d="M3.5 31 L10.5 21.5" stroke="#f0f0f0" stroke-width="1.6" stroke-linecap="round"/>
<rect x="12.8" y="19.7" width="17.5" height="10.8" rx="2.2" fill="url(#spyr)" stroke="#4a58c0" stroke-width="1.1"/>
<circle cx="17.6" cy="11.3" r="9" fill="#dcecfa" stroke="#66666e" stroke-width="1.9"/><path d="M10.5 9.8 H23" stroke="#98b8ec" stroke-width="0.9"/><circle cx="19.8" cy="12.2" r="2.2" fill="none" stroke="#8a8ad8" stroke-width="0.9"/><path d="M19.8 14.4 V19" stroke="#8a8ad8" stroke-width="1"/></svg>
<svg style="left:869px;top:140px" width="8" height="6" viewBox="0 0 8 6"><path d="M0.5 1 H7.5 L4 4.5 Z" fill="#303030"/></svg>
<svg style="left:885px;top:100px" width="57" height="57" viewBox="0 0 57 57"><circle cx="28" cy="28" r="25.5" fill="url(#grayball)" stroke="#3a9a3a" stroke-width="2"/><path d="M22 13 L40 28.7 L22 44.4 Z" fill="#0a8a0a"/></svg>
<svg style="left:1085px;top:113px" width="16" height="10" viewBox="0 0 16 10"><path d="M1 1 H15 L8 8 Z" fill="#404040"/></svg>
<svg style="left:1085px;top:159px" width="16" height="10" viewBox="0 0 16 10"><path d="M1 1 H15 L8 8 Z" fill="#404040"/></svg>
<svg style="left:1117px;top:111px" width="17" height="15" viewBox="0 0 17 15"><path d="M8.2 1 Q16 1 16 5.5 Q16 10 9.5 10 L6 13.5 L6.5 10 Q0.8 9.5 0.8 5.5 Q0.8 1 8.2 1 Z" fill="#f0f6ff" stroke="#6080d0" stroke-width="0.9"/><text x="8.3" y="8.8" font-size="9" font-weight="bold" text-anchor="middle" fill="#1a3aa0" font-family="Liberation Sans">?</text></svg>
<svg style="left:1120px;top:155px" width="11" height="18" viewBox="0 0 11 18"><circle cx="5.3" cy="4.7" r="4.3" fill="#f0b030" stroke="#b07a10" stroke-width="0.8"/><circle cx="4.8" cy="3.8" r="1.2" fill="#fff"/><path d="M4.3 8.5 H6.3 V16.5 L5.3 17.3 L4.3 16.5 Z" fill="#e8a020" stroke="#b07a10" stroke-width="0.5"/><path d="M6.3 11 H7.5 M6.3 13.5 H7.5" stroke="#b07a10" stroke-width="1"/></svg>
<svg style="left:1117px;top:201px" width="17" height="17" viewBox="0 0 17 17"><path d="M1.3 1.3 H6.5 V4 H4.5 V12.8 H6.5 V15.6 H1.3 Z M15.6 1.3 H10.3 V4 H12.3 V12.8 H10.3 V15.6 H15.6 Z" fill="#7a7070" stroke="#5a5050" stroke-width="0.5"/></svg>
<svg style="left:1265px;top:109px" width="17" height="18" viewBox="0 0 17 18"><path d="M6 3 H9 V0.8 H13 V3 H16 V8.5 H14 V11.5 H16 V17 H11 V15 H8.5 V17 H3.5 V13 H1.5 V8.5 H3.5 V5.5 H6 Z" fill="#1a8a1a" stroke="#0a6010" stroke-width="0.6"/><path d="M8 6 L12 9 M9 12 L13 14" stroke="#5ab05a" stroke-width="0.8"/><path d="M0.5 3.5 H6 M3.5 1 L6.5 3.5 L3.5 6 M0.5 6.5 H5" stroke="#2a8af0" stroke-width="1.5" fill="none"/></svg>
<svg style="left:1265px;top:157px" width="17" height="13" viewBox="0 0 17 13"><rect x="0.8" y="0.8" width="6.7" height="10.5" fill="#dfe6f4" stroke="#9aa8d8" stroke-width="0.8"/><rect x="8.3" y="0.8" width="6.7" height="10.5" fill="#dfe6f4" stroke="#9aa8d8" stroke-width="0.8"/><path d="M1.5 11.8 H15.8 V2" stroke="#7a7a7a" stroke-width="1" fill="none"/><path d="M10 6.5 L11.5 8 L14.5 4" stroke="#e06020" stroke-width="1.3" fill="none"/></svg>
<svg style="left:1266px;top:201px" width="16" height="17" viewBox="0 0 16 17"><path d="M2 13 Q1.5 5 10 2.5" stroke="#1a4aa0" stroke-width="2.2" fill="none"/><path d="M8.5 0 L13.5 2.5 L9 5.5 Z" fill="#1a4aa0"/><path d="M3 14 Q9 16 14 9" stroke="#e8e8e8" stroke-width="2" fill="none"/><path d="M7 14.5 L13 11" stroke="#f0a830" stroke-width="2.4"/><path d="M2 14 L6.5 14.8" stroke="#6a8a6a" stroke-width="2"/></svg>
<svg style="left:1524px;top:109px" width="17" height="18" viewBox="0 0 17 18"><rect x="1.4" y="1.4" width="11.4" height="14" fill="#f4f6fc" stroke="#a0a8e0" stroke-width="0.8"/><path d="M12.8 5 V15.5 H1.8" stroke="#3a3a78" stroke-width="1.3" fill="none"/><path d="M3 5.4 H5 M3 7.5 H5 M3 9.5 H5 M3 11.5 H5" stroke="#2a6ac0" stroke-width="1.1"/><path d="M6 5.4 H9.8 M6 7.5 H9.8 M6 9.5 H9.8 M6 11.5 H9.8" stroke="#8a8ad0" stroke-width="0.8"/><rect x="7.3" y="1" width="7.5" height="7.4" fill="#fffaf4" stroke="#c8c8c8" stroke-width="0.5"/><circle cx="11" cy="4.7" r="2.4" fill="#f8e0b8" stroke="#f0a850" stroke-width="1.2"/><circle cx="11" cy="4.7" r="0.9" fill="#d08030"/></svg>
<svg style="left:1749px;top:95px" width="68" height="66" viewBox="0 0 68 66"><path d="M3 17 Q3 16 4 16 H26 V63 H3 Z" fill="url(#fold)" stroke="#8a6a50" stroke-width="1.2"/>
<path d="M15 33 H65 L53 63 H5 Z" fill="url(#fold2)" stroke="#8a6030" stroke-width="1.2"/><path d="M8 60 L17 36" stroke="#fff3c0" stroke-width="1.5" opacity="0.8"/>
<g stroke="#2a3070" stroke-width="0.9"><rect x="36" y="2" width="7" height="8" rx="1.5" fill="url(#bino)"/><rect x="46" y="2" width="8" height="8" rx="1.5" fill="url(#bino)"/>
<rect x="28" y="8" width="16" height="13" rx="2" fill="url(#bino)"/><rect x="45" y="8" width="15" height="13" rx="2" fill="url(#bino)"/>
<rect x="25" y="20" width="17" height="17" rx="2" fill="url(#bino)"/><rect x="47" y="20" width="17" height="17" rx="2" fill="url(#bino)"/></g><rect x="59" y="20" width="5" height="17" fill="#383f88"/><rect x="42" y="23" width="5" height="8" fill="#f0c860"/></svg>
<svg style="left:1827px;top:95px" width="70" height="66" viewBox="0 0 70 66"><path d="M4 33 L36 49 V63 L4 47 Z" fill="#e8ecf8" stroke="#5a5ab8" stroke-width="1.8"/><path d="M36 49 L66 19 V33 L36 63 Z" fill="#c8c8f0" stroke="#5a5ab8" stroke-width="1.8"/>
<path d="M4 33 L34 3 L66 19 L36 49 Z" fill="url(#book)" stroke="#5a5ab8" stroke-width="1.8"/><path d="M57 15.5 L27 45.5" stroke="#8484d8" stroke-width="4.5"/><path d="M44 9 L14 39" stroke="#c8c8f0" stroke-width="5" opacity="0.6"/></svg>
<svg style="left:2183px;top:252px" width="17" height="14" viewBox="0 0 17 14"><path d="M4 10 L9.5 4.5 L15 10" stroke="#606060" stroke-width="1.8" fill="none"/></svg>
<svg style="position:absolute;width:0;height:0"><defs>
<linearGradient id="tfold" x1="0" y1="0" x2="0" y2="1"><stop offset="0" stop-color="#fff6d8"/><stop offset="0.45" stop-color="#f8e2a0"/><stop offset="0.55" stop-color="#fde8a8"/><stop offset="1" stop-color="#f0c020"/></linearGradient>
</defs></svg>
<svg style="left:15px;top:315px" width="16" height="13" viewBox="0 0 16 13"><path d="M0.5 1.5 H5 L6 2.5 H14.5 V11.5 H0.5 Z" fill="url(#tfold)"/><path d="M0.5 1.2 H5 L6 2.2 H14.5" stroke="#505a70" stroke-width="0.9" fill="none"/><path d="M1.5 12 H15.5 V3" stroke="#b0b0b0" stroke-width="0.8" fill="none" opacity="0.7"/></svg>
<svg style="left:31px;top:349px" width="16" height="13" viewBox="0 0 16 13"><path d="M0.5 1.5 H5 L6 2.5 H14.5 V11.5 H0.5 Z" fill="url(#tfold)"/><path d="M0.5 1.2 H5 L6 2.2 H14.5" stroke="#505a70" stroke-width="0.9" fill="none"/><path d="M1.5 12 H15.5 V3" stroke="#b0b0b0" stroke-width="0.8" fill="none" opacity="0.7"/></svg>
<svg style="left:31px;top:383px" width="16" height="13" viewBox="0 0 16 13"><path d="M0.5 1.5 H5 L6 2.5 H14.5 V11.5 H0.5 Z" fill="url(#tfold)"/><path d="M0.5 1.2 H5 L6 2.2 H14.5" stroke="#505a70" stroke-width="0.9" fill="none"/><path d="M1.5 12 H15.5 V3" stroke="#b0b0b0" stroke-width="0.8" fill="none" opacity="0.7"/></svg>
<svg style="left:49px;top:416px" width="10" height="16" viewBox="0 0 10 16"><path d="M3 1.5 Q5.5 0.5 6.8 1.5 L5.8 10 H3.8 Z" fill="#e07030" stroke="#a04010" stroke-width="0.6"/><path d="M3.6 2 L4.2 9" stroke="#c02010" stroke-width="1"/><circle cx="4.8" cy="13" r="1.6" fill="#e07030" stroke="#a04010" stroke-width="0.6"/></svg>
<svg style="left:46.5px;top:451px" width="17" height="17" viewBox="0 0 17 17"><g transform="translate(0.5,0.5)"><rect x="0.5" y="0.5" width="15" height="15" fill="#fff" stroke="#808080" stroke-width="0.9"/><path d="M15.2 0.5 V15.2 H0.3" stroke="#000" stroke-width="1.6" fill="none"/>
<path d="M11.8 3.2 Q8.5 1.5 5.8 3 Q3 5 6.2 7.5 Q10 9.5 7.8 12 Q5.5 13.5 3 12.2" fill="none" stroke="#101010" stroke-width="2.8" stroke-linecap="round"/>
<path d="M11.8 3.2 Q8.5 1.5 5.8 3 Q3 5 6.2 7.5 Q10 9.5 7.8 12 Q5.5 13.5 3 12.2" fill="none" stroke="#fff" stroke-width="1.4" stroke-linecap="round"/>
<path d="M5.5 3.2 H9 M5 5.2 H8 M6.3 7.5 H9.5 M7 9.6 H10 M5 11.8 H8" stroke="#f0d800" stroke-width="1.1"/><path d="M9.5 6 L13 3" stroke="#000" stroke-width="1.2"/><circle cx="12.8" cy="3.8" r="1.2" fill="none" stroke="#000" stroke-width="0.8"/></g></svg>
<svg style="left:46.5px;top:485px" width="17" height="17" viewBox="0 0 17 17"><g transform="translate(0.5,0.5)"><rect x="0.5" y="0.5" width="15" height="15" fill="#fff" stroke="#808080" stroke-width="0.9"/><path d="M15.2 0.5 V15.2 H0.3" stroke="#000" stroke-width="1.6" fill="none"/>
<path d="M11.8 3.2 Q8.5 1.5 5.8 3 Q3 5 6.2 7.5 Q10 9.5 7.8 12 Q5.5 13.5 3 12.2" fill="none" stroke="#101010" stroke-width="2.8" stroke-linecap="round"/>
<path d="M11.8 3.2 Q8.5 1.5 5.8 3 Q3 5 6.2 7.5 Q10 9.5 7.8 12 Q5.5 13.5 3 12.2" fill="none" stroke="#fff" stroke-width="1.4" stroke-linecap="round"/>
<path d="M5.5 3.2 H9 M5 5.2 H8 M6.3 7.5 H9.5 M7 9.6 H10 M5 11.8 H8" stroke="#f0d800" stroke-width="1.1"/><path d="M9.5 6 L13 3" stroke="#000" stroke-width="1.2"/><circle cx="12.8" cy="3.8" r="1.2" fill="none" stroke="#000" stroke-width="0.8"/></g></svg>
<svg style="left:46.5px;top:553px" width="17" height="17" viewBox="0 0 17 17"><g transform="translate(0.5,0.5)"><rect x="0.5" y="0.5" width="15" height="15" fill="#fff" stroke="#808080" stroke-width="0.9"/><path d="M15.2 0.5 V15.2 H0.3" stroke="#000" stroke-width="1.6" fill="none"/>
<path d="M11.8 3.2 Q8.5 1.5 5.8 3 Q3 5 6.2 7.5 Q10 9.5 7.8 12 Q5.5 13.5 3 12.2" fill="none" stroke="#101010" stroke-width="2.8" stroke-linecap="round"/>
<path d="M11.8 3.2 Q8.5 1.5 5.8 3 Q3 5 6.2 7.5 Q10 9.5 7.8 12 Q5.5 13.5 3 12.2" fill="none" stroke="#fff" stroke-width="1.4" stroke-linecap="round"/>
<path d="M5.5 3.2 H9 M5 5.2 H8 M6.3 7.5 H9.5 M7 9.6 H10 M5 11.8 H8" stroke="#f0d800" stroke-width="1.1"/><path d="M9.5 6 L13 3" stroke="#000" stroke-width="1.2"/><circle cx="12.8" cy="3.8" r="1.2" fill="none" stroke="#000" stroke-width="0.8"/></g></svg>
<svg style="left:46.5px;top:519px" width="18" height="17" viewBox="0 0 18 17"><g fill="#fff" stroke="#a8b8f0" stroke-width="0.7"><rect x="0.5" y="0.5" width="7.5" height="2.6"/><rect x="8" y="2.3" width="8.5" height="2.6"/><rect x="0.5" y="5" width="7.5" height="2.6"/></g><g fill="#fff" stroke="#f0d8a0" stroke-width="0.7"><rect x="7.5" y="7.8" width="9" height="2.3"/></g><g fill="#fff" stroke="#a0c8f0" stroke-width="0.7"><rect x="7.5" y="10.3" width="9" height="2.4"/><rect x="7.5" y="12.9" width="9" height="2.5"/></g></svg>
<svg style="left:412px;top:287px" width="17" height="17" viewBox="0 0 17 17"><g transform="translate(0.5,0.5)"><rect x="0.5" y="0.5" width="15" height="15" fill="#fff" stroke="#808080" stroke-width="0.9"/><path d="M15.2 0.5 V15.2 H0.3" stroke="#000" stroke-width="1.6" fill="none"/>
<path d="M11.8 3.2 Q8.5 1.5 5.8 3 Q3 5 6.2 7.5 Q10 9.5 7.8 12 Q5.5 13.5 3 12.2" fill="none" stroke="#101010" stroke-width="2.8" stroke-linecap="round"/>
<path d="M11.8 3.2 Q8.5 1.5 5.8 3 Q3 5 6.2 7.5 Q10 9.5 7.8 12 Q5.5 13.5 3 12.2" fill="none" stroke="#fff" stroke-width="1.4" stroke-linecap="round"/>
<path d="M5.5 3.2 H9 M5 5.2 H8 M6.3 7.5 H9.5 M7 9.6 H10 M5 11.8 H8" stroke="#f0d800" stroke-width="1.1"/><path d="M9.5 6 L13 3" stroke="#000" stroke-width="1.2"/><circle cx="12.8" cy="3.8" r="1.2" fill="none" stroke="#000" stroke-width="0.8"/></g></svg>
<svg style="left:693px;top:287px" width="17" height="17" viewBox="0 0 17 17"><g fill="#fff" stroke="#a8b8f0" stroke-width="0.7"><rect x="0.5" y="0.5" width="7.5" height="2.6"/><rect x="8" y="2.3" width="8.5" height="2.6"/><rect x="0.5" y="5" width="7.5" height="2.6"/></g><g fill="#fff" stroke="#f0d8a0" stroke-width="0.7"><rect x="7.5" y="7.8" width="9" height="2.3"/></g><g fill="#fff" stroke="#a0c8f0" stroke-width="0.7"><rect x="7.5" y="10.3" width="9" height="2.4"/><rect x="7.5" y="12.9" width="9" height="2.5"/></g></svg>
<svg style="left:659.5px;top:288.5px" width="12" height="12" viewBox="0 0 12 12"><path d="M2.3 2.3 L9.7 9.7 M9.7 2.3 L2.3 9.7" stroke="#505050" stroke-width="1.5"/></svg>
<svg style="left:1000px;top:288.5px" width="12" height="12" viewBox="0 0 12 12"><path d="M2.3 2.3 L9.7 9.7 M9.7 2.3 L2.3 9.7" stroke="#505050" stroke-width="1.5"/></svg>
<div style="left:649.5px;top:279px;width:1px;height:32px;background:linear-gradient(#fff,#d8d8d8 20%,#d8d8d8 80%,#fff)"></div>
<div style="left:682.5px;top:279px;width:1px;height:32px;background:linear-gradient(#fff,#d8d8d8 20%,#d8d8d8 80%,#fff)"></div>
<div style="left:990.5px;top:279px;width:1px;height:32px;background:linear-gradient(#fff,#d8d8d8 20%,#d8d8d8 80%,#fff)"></div>
<div style="left:1023px;top:279px;width:1px;height:32px;background:linear-gradient(#fff,#d8d8d8 20%,#d8d8d8 80%,#fff)"></div>
<div style="left:2178px;top:276px;width:24px;height:34px;border:1px solid #d0d0d0;border-right:none;border-bottom:none;background:#fff"></div>
<svg style="left:2189px;top:289px" width="10" height="6" viewBox="0 0 10 6"><path d="M0.5 0.5 H8.5 L4.5 4.5 Z" fill="#606060"/></svg>
<svg style="left:477px;top:431px" width="22" height="123" viewBox="0 0 22 123"><rect x="2.5" y="1.5" width="16" height="16" fill="#fff" stroke="#a0a0a0" stroke-width="1"/><path d="M6 9.5 H15" stroke="#303030" stroke-width="1.3"/><path d="M10.5 17.5 V121.5 H19" stroke="#a0a0a0" stroke-width="1" fill="none"/></svg>
<svg style="left:2189px;top:327px" width="12" height="10" viewBox="0 0 12 10"><path d="M1 8 L6 3 L11 8" stroke="#606060" stroke-width="1.8" fill="none"/></svg>
<svg style="left:2189px;top:1073px" width="12" height="10" viewBox="0 0 12 10"><path d="M1 2 L6 7 L11 2" stroke="#606060" stroke-width="1.8" fill="none"/></svg>
<svg style="left:418px;top:1107px" width="10" height="12" viewBox="0 0 10 12"><path d="M8 1 L3 6 L8 11" stroke="#606060" stroke-width="1.8" fill="none"/></svg>
<svg style="left:2155px;top:1107px" width="10" height="12" viewBox="0 0 10 12"><path d="M2 1 L7 6 L2 11" stroke="#606060" stroke-width="1.8" fill="none"/></svg>
<svg style="left:418px;top:1253px" width="10" height="12" viewBox="0 0 10 12"><path d="M8 1 L3 6 L8 11" stroke="#606060" stroke-width="1.8" fill="none"/></svg>
<svg style="left:2155px;top:1253px" width="10" height="12" viewBox="0 0 10 12"><path d="M2 1 L7 6 L2 11" stroke="#606060" stroke-width="1.8" fill="none"/></svg>
<svg style="left:2186px;top:1218px" width="12" height="10" viewBox="0 0 12 10"><path d="M1 8 L6 3 L11 8" stroke="#606060" stroke-width="1.3" fill="none"/></svg>
<svg style="left:2186px;top:1229px" width="12" height="10" viewBox="0 0 12 10"><path d="M1 2 L6 7 L11 2" stroke="#606060" stroke-width="1.3" fill="none"/></svg>
<svg style="left:407px;top:1173px" width="8" height="39" viewBox="0 0 8 39"><circle cx="2" cy="1.5" r="0.7" fill="#b0b0b0"/><circle cx="5" cy="4.1" r="0.7" fill="#b0b0b0"/><circle cx="2" cy="6.7" r="0.7" fill="#b0b0b0"/><circle cx="5" cy="9.3" r="0.7" fill="#b0b0b0"/><circle cx="2" cy="11.9" r="0.7" fill="#b0b0b0"/><circle cx="5" cy="14.5" r="0.7" fill="#b0b0b0"/><circle cx="2" cy="17.1" r="0.7" fill="#b0b0b0"/><circle cx="5" cy="19.7" r="0.7" fill="#b0b0b0"/><circle cx="2" cy="22.3" r="0.7" fill="#b0b0b0"/><circle cx="5" cy="24.900000000000002" r="0.7" fill="#b0b0b0"/><circle cx="2" cy="27.5" r="0.7" fill="#b0b0b0"/><circle cx="5" cy="30.1" r="0.7" fill="#b0b0b0"/><circle cx="2" cy="32.7" r="0.7" fill="#b0b0b0"/><circle cx="5" cy="35.300000000000004" r="0.7" fill="#b0b0b0"/><circle cx="2" cy="37.9" r="0.7" fill="#b0b0b0"/></svg>
<svg style="left:681px;top:1183px" width="17" height="16" viewBox="0 0 17 16"><circle cx="4.5" cy="9.5" r="4" fill="#f0b820" stroke="#8a5a10" stroke-width="1"/><circle cx="12" cy="9.5" r="4" fill="#f0b820" stroke="#8a5a10" stroke-width="1"/><path d="M3 6 Q8 0 14 6" stroke="#c08010" stroke-width="2.5" fill="none"/><circle cx="4" cy="10" r="1.3" fill="#c03010"/><circle cx="12.5" cy="10" r="1.3" fill="#c03010"/></svg>
<svg style="left:704px;top:1183px" width="14" height="17" viewBox="0 0 14 17"><rect x="3" y="0.7" width="9.5" height="12" fill="#f0f4ff" stroke="#7a8ac8" stroke-width="0.8"/><rect x="0.8" y="3" width="9.5" height="12.5" fill="#e8f0fc" stroke="#6a7ac0" stroke-width="0.8"/><path d="M2.5 8 H8.5 M2.5 10.5 H8.5" stroke="#80b8f0" stroke-width="1"/></svg>
<svg style="left:725px;top:1183px" width="17" height="16" viewBox="0 0 17 16"><path d="M1.5 7.5 L8 1 L15.5 8 L9 14.5 Z" fill="#a8d0f8" stroke="#3a6ab8" stroke-width="0.9"/><path d="M2 7.5 L9 14" stroke="#fff" stroke-width="1.2"/></svg>
<svg style="left:747px;top:1183px" width="17" height="17" viewBox="0 0 17 17"><rect x="6" y="1" width="9" height="13" fill="#b8c8f0" stroke="#4a6ac0" stroke-width="0.8"/><rect x="1" y="3" width="9" height="13" fill="#a0b8f0" stroke="#4a5ab0" stroke-width="0.8"/><path d="M2.5 8 H8.5 M2.5 10.5 H8.5 M2.5 13 H8.5" stroke="#8a8ad8" stroke-width="1"/></svg>
<div style="left:0px;top:949px;width:22px;height:21px;background:#cce8ff;border:1px solid #99d1ff"></div>
<svg style="left:0px;top:949px" width="22" height="21" viewBox="0 0 22 21"><g stroke="#404040" stroke-width="0.8" fill="#fff"><rect x="3" y="4" width="4" height="4"/><rect x="3" y="12" width="4" height="4"/></g><path d="M4 6 H6 M5 5 V7 M4 14 H6" stroke="#000" stroke-width="0.8"/><path d="M9 5 H18 M9 7.5 H18 M9 13 H18 M9 15.5 H18" stroke="#7a7a9a" stroke-width="0.9" stroke-dasharray="1.5 0.8"/></svg>
<svg style="left:24px;top:949px" width="18" height="21" viewBox="0 0 18 21"><text x="1" y="9" font-size="9" fill="#2a4ab0" font-family="Liberation Serif">A</text><text x="1.5" y="18" font-size="9" fill="#a03020" font-family="Liberation Serif">Z</text><path d="M12.5 2 V17 M9.8 14 L12.5 17.5 L15.2 14" stroke="#000" stroke-width="1.1" fill="none"/></svg>
<div style="left:47px;top:949px;width:1px;height:21px;background:#a0a0a0"></div>
<svg style="left:53px;top:952px" width="18" height="15" viewBox="0 0 18 15"><rect x="1" y="1" width="15" height="13" fill="#f0f0f0" stroke="#b0b0b0" stroke-width="1"/><path d="M1 4 H16 M4 7.5 H8 M4 10 H12" stroke="#b8b8b8" stroke-width="1"/></svg>
</body></html>
